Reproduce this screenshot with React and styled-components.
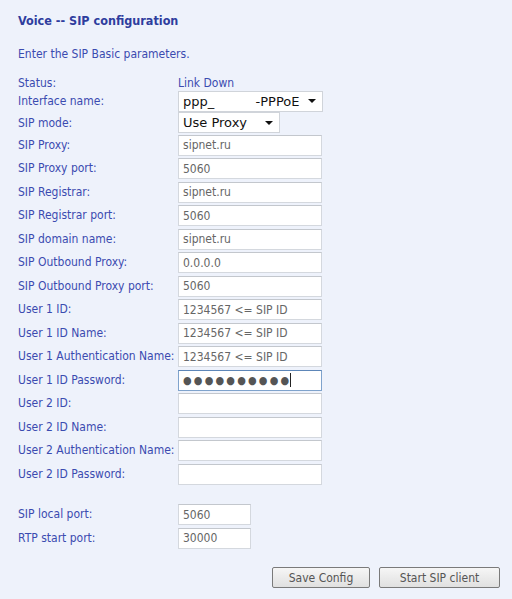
import React from 'react'
import styled, { createGlobalStyle } from 'styled-components'

const GlobalStyle = createGlobalStyle`
  html, body {
    margin: 0;
    padding: 0;
    background: #eef2fb;
  }
  body {
    font-family: "DejaVu Sans Condensed", "DejaVu Sans", sans-serif;
    font-size: 12px;
  }
`

const Page = styled.div`
  width: 512px;
  height: 599px;
  box-sizing: border-box;
  padding: 12px 12px 0 18px;
  background: #eef2fb;
  color: #3b4bb0;
`

const Title = styled.div`
  font-weight: bold;
  font-size: 12.5px;
  color: #2e3d9e;
  height: 17px;
  line-height: 17px;
`

const Intro = styled.div`
  margin-top: 17px;
  height: 17px;
  line-height: 17px;
`

const Form = styled.div`
  margin-top: 12.5px;
  display: grid;
  grid-template-columns: 160px auto;
  align-items: center;
`

const Label = styled.div`
  height: ${p => p.$h || 23.5}px;
  line-height: ${p => p.$h || 23.5}px;
  white-space: nowrap;
`

const Cell = styled.div`
  height: ${p => p.$h || 23.5}px;
  display: flex;
  align-items: center;
`

const StatusText = styled.span`
  line-height: 15px;
  color: #3b4bb0;
`

const Input = styled.div`
  box-sizing: border-box;
  width: ${p => p.$w || 144}px;
  height: 21px;
  background: #fff;
  border: 1px solid ${p => (p.$focus ? '#7fa3cc' : '#d4d8de')};
  border-top-color: ${p => (p.$focus ? '#5d86b8' : '#c3c7cd')};
  padding: 0 4px;
  display: flex;
  align-items: center;
  color: #666;
  font-family: "DejaVu Sans Condensed", "DejaVu Sans", sans-serif;
  font-size: 12px;
`

const Dots = styled.span`
  color: #555;
  font-size: 11px;
  letter-spacing: 2.2px;
`

const Caret = styled.span`
  display: inline-block;
  width: 1px;
  height: 14px;
  background: #222;
  margin-left: -1px;
`

const Select = styled.div`
  box-sizing: border-box;
  width: ${p => p.$w}px;
  height: 21px;
  background: #fff;
  border: 1px solid #d0d4da;
  padding: 0 6px 0 4px;
  display: flex;
  align-items: center;
  color: #111;
  font-size: 13px;
  font-family: "DejaVu Sans", sans-serif;
`

const SelectText = styled.span`
  flex: 1;
  white-space: pre;
`

const Arrow = styled.span`
  width: 0;
  height: 0;
  border-left: 4px solid transparent;
  border-right: 4px solid transparent;
  border-top: 4px solid #111;
`

const Spacer = styled.div`
  grid-column: 1 / 3;
  height: 17px;
`

const Buttons = styled.div`
  display: flex;
  justify-content: flex-end;
  gap: 9px;
  margin-top: 17px;
`

const Button = styled.button`
  box-sizing: border-box;
  width: ${p => p.$w}px;
  height: 21px;
  border: 1px solid #7a7a7a;
  border-radius: 2px;
  background: linear-gradient(#f6f6f6, #e0e0e0);
  color: #555;
  font-family: "DejaVu Sans Condensed", "DejaVu Sans", sans-serif;
  font-size: 12px;
  padding: 0;
`

const fields = [
  ['SIP Proxy:', 'sipnet.ru'],
  ['SIP Proxy port:', '5060'],
  ['SIP Registrar:', 'sipnet.ru'],
  ['SIP Registrar port:', '5060'],
  ['SIP domain name:', 'sipnet.ru'],
  ['SIP Outbound Proxy:', '0.0.0.0'],
  ['SIP Outbound Proxy port:', '5060'],
  ['User 1 ID:', '1234567 <= SIP ID'],
  ['User 1 ID Name:', '1234567 <= SIP ID'],
  ['User 1 Authentication Name:', '1234567 <= SIP ID'],
]

const user2 = ['User 2 ID:', 'User 2 ID Name:', 'User 2 Authentication Name:', 'User 2 ID Password:']

const App = () => {
  return (
    <Page>
      <GlobalStyle />
      <Title>Voice -- SIP configuration</Title>
      <Intro>Enter the SIP Basic parameters.</Intro>
      <Form>
        <Label $h={15}>Status:</Label>
        <Cell $h={15}><StatusText>Link Down</StatusText></Cell>

        <Label $h={21}>Interface name:</Label>
        <Cell $h={21}>
          <Select $w={145}>
            <SelectText>{'ppp_          -PPPoE'}</SelectText>
            <Arrow />
          </Select>
        </Cell>

        <Label $h={22}>SIP mode:</Label>
        <Cell $h={22}>
          <Select $w={102}>
            <SelectText>Use Proxy</SelectText>
            <Arrow />
          </Select>
        </Cell>

        {fields.map(([label, value]) => (
          <React.Fragment key={label}>
            <Label>{label}</Label>
            <Cell><Input>{value}</Input></Cell>
          </React.Fragment>
        ))}

        <Label>User 1 ID Password:</Label>
        <Cell>
          <Input $focus>
            <Dots>●●●●●●●●●●</Dots>
            <Caret />
          </Input>
        </Cell>

        {user2.map(label => (
          <React.Fragment key={label}>
            <Label>{label}</Label>
            <Cell><Input /></Cell>
          </React.Fragment>
        ))}

        <Spacer />

        <Label>SIP local port:</Label>
        <Cell><Input $w={73}>5060</Input></Cell>
        <Label>RTP start port:</Label>
        <Cell><Input $w={73}>30000</Input></Cell>
      </Form>
      <Buttons>
        <Button $w={98}>Save Config</Button>
        <Button $w={121}>Start SIP client</Button>
      </Buttons>
    </Page>
  )
}

export default App
